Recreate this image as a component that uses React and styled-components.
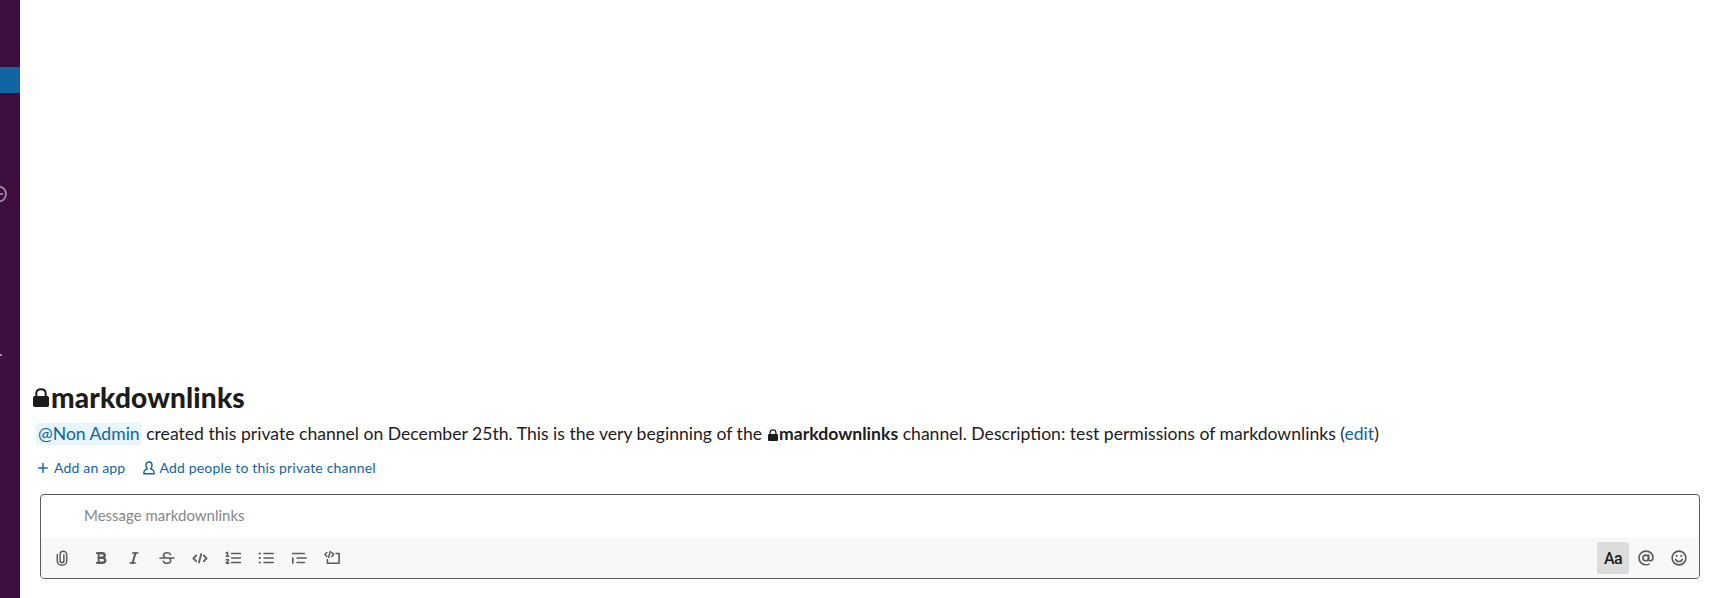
import React from "react";
import styled, { createGlobalStyle } from "styled-components";

const GlobalStyle = createGlobalStyle`
  *, *::before, *::after { box-sizing: border-box; }
  body {
    margin: 0;
    background: #fff;
    color: #1d1c1d;
    font-family: Lato, "Liberation Sans", sans-serif;
    overflow: hidden;
  }
`;

const Page = styled.div`
  display: flex;
  width: 100%;
  height: 598px;
`;

const Sidebar = styled.aside`
  display: flex;
  flex-direction: column;
  width: 20px;
  flex: none;
  overflow: hidden;
  background: #3f0e40;
`;

const SidebarItem = styled.div`
  flex: none;
  height: ${(p) => p.$height}px;
  margin-top: ${(p) => p.$gap}px;
  background: ${(p) => (p.$active ? "#1264a3" : "transparent")};
  svg { display: block; }
`;

const Main = styled.main`
  display: flex;
  flex-direction: column;
  justify-content: flex-end;
  flex: 1;
  min-width: 0;
  padding: 0 10px 19px 12px;
`;

const Title = styled.h1`
  display: flex;
  align-items: center;
  height: 34px;
  margin: 0;
  font-size: 28px;
  font-weight: 900;
  line-height: 34px;
  letter-spacing: 0.18px;
  svg { flex: none; margin: 0 2px 0 1px; }
`;

const Intro = styled.p`
  margin: 8px 0 0 4px;
  height: 24px;
  font-size: 17.6px;
  line-height: 24px;
  white-space: nowrap;
`;

const Mention = styled.span`
  padding: 0 2px 1px;
  border-radius: 3px;
  background: #e8f5fa;
  color: #1264a3;
`;

const ChannelName = styled.b`
  font-weight: 700;
  svg { margin: 0 1.5px 0 1px; vertical-align: -0.5px; }
`;

const Link = styled.a`
  color: #1264a3;
`;

const Actions = styled.div`
  display: flex;
  align-items: center;
  gap: 18px;
  height: 20px;
  margin: 12px 0 0 6px;
`;

const Action = styled.a`
  display: flex;
  align-items: center;
  gap: ${(p) => p.$gap}px;
  color: #1264a3;
  font-size: 14px;
  line-height: 20px;
  letter-spacing: 0.18px;
  white-space: nowrap;
  svg { flex: none; }
`;

const Composer = styled.section`
  height: 85px;
  margin: 16px 0 0 8px;
  border: 1px solid #5b5a5d;
  border-radius: 4px;
  overflow: hidden;
`;

const Message = styled.div`
  height: 43px;
  padding: 9px 0 0 43px;
  color: #868686;
  font-size: 15px;
  line-height: 22px;
`;

const Toolbar = styled.div`
  display: flex;
  align-items: center;
  justify-content: space-between;
  height: 40px;
  padding: 0 4px 0 4.5px;
  background: #f8f8f8;
`;

const ToolGroup = styled.div`
  display: flex;
  gap: 1px;
`;

const Tool = styled.button`
  display: flex;
  align-items: center;
  justify-content: center;
  width: 32px;
  height: 32px;
  padding: 0;
  margin: 0 ${(p) => p.$after || 0}px 0 0;
  border: 0;
  border-radius: 2px;
  background: ${(p) => (p.$active ? "#dcdcdc" : "transparent")};
  color: ${(p) => (p.$active ? "#1d1c1d" : "#5b5a5d")};
  font: 500 16px Roboto, sans-serif;
  letter-spacing: -0.6px;
`;

const Glyph = styled.svg`
  fill: none;
  stroke: currentColor;
  stroke-width: ${(p) => p.$stroke || 1.6};
  stroke-linecap: round;
  stroke-linejoin: round;
`;

const Icon = ({ w = 16, h = 16, stroke, children }) => (
  <Glyph width={w} height={h} viewBox={`0 0 ${w} ${h}`} $stroke={stroke}>{children}</Glyph>
);

const Lock = ({ w, h }) => (
  <svg width={w} height={h} viewBox="0 0 16 19">
    <path d="M3.3 9V5.6C3.3 2.8 5.2 1.2 8 1.2s4.7 1.6 4.7 4.4V9" fill="none" stroke="currentColor" strokeWidth="2" />
    <rect x="0" y="8" width="16" height="11" rx="1.7" fill="currentColor" />
  </svg>
);

const Clip = () => (
  <Icon stroke={1.5}><path d="M3.3 4.500v6.400a4.700 4.300 0 0 0 9.400 0V4.500a3.300 3.300 0 0 0-6.600 0v6.200a1.900 1.900 0 0 0 3.800 0V4.800" /></Icon>
);
const Bold = () => (
  <Icon><path d="M3 3.200h6M3 12.800h6M5.600 3v10M5.500 7.800H9" strokeWidth="1.8" strokeLinecap="butt" /><path d="M5.800 3.300h3.200c3.600 0 3.600 4.500 0 4.500H5.800M9 7.800c4.400 0 4.400 4.900 0 4.900H5.800" strokeWidth="2.400" /></Icon>
);
const Italic = () => (
  <Icon><path d="M6.500 3h5.500M4 13h5.500" strokeWidth="1.5" /><path d="M9.500 3 6.500 13" strokeWidth="2" /></Icon>
);
const Strike = () => (
  <Icon><path d="M1 8h14M11.500 4.500C11 3.300 9.800 2.700 8 2.700c-2 0-3.500 1-3.500 2.600 0 1.100.6 1.900 1.700 2.400M4.300 11.200c.5 1.400 1.800 2.100 3.700 2.100 2.200 0 3.700-1 3.700-2.700 0-.8-.4-1.500-1.100-2" /></Icon>
);
const Code = () => (
  <Icon stroke={1.8}><path d="M4.200 5.500 1.300 8.300l2.900 2.800M11.800 5.500l2.900 2.800-2.900 2.800M9.200 4 7 12.500" /></Icon>
);
const Ordered = () => (
  <Icon stroke={1.5}><path d="M6.500 3.500h9M6.500 8h9M6.500 12.500h9" /><path d="M1.200 3l1.300-.7v4M1.200 6.300h2.600M1.200 9.900c.5-.5 2.500-.5 2.300.6-.1.9-2.300 1.700-2.300 2.700h2.800" strokeWidth="1.500" /></Icon>
);
const Bullets = () => (
  <Icon stroke={1.5}><path d="M6 3.500h9.300M6 8h9.300M6 12.500h9.300" /><path d="M1.700 3.500h.1M1.700 8h.1M1.700 12.500h.1" strokeWidth="2.200" /></Icon>
);
const Quote = () => (
  <Icon stroke={1.5}><path d="M1.500 3.500h11.800M6 8h9.300M6 12.500h7.300" /><path d="M1.800 8v5" strokeWidth="1.700" /></Icon>
);
const CodeBlock = () => (
  <Icon stroke={1.5}><path d="M2.800 2.500.9 4.500l1.900 2M7.800 2.500l1.900 2-1.900 2M6.200 1.500 4.700 7.300" /><path d="M12.200 3.500h2.900v9.700H3.400V9.600" strokeWidth="1.600" /></Icon>
);
const At = () => (
  <Icon stroke={1.6}><circle cx="7.8" cy="7.900" r="2.800" /><path d="M10.600 5v3.900c0 1.200.6 1.800 1.800 1.800 1.700 0 2.500-1.300 2.500-3 0-4-2.900-6.600-6.900-6.600C4 1.100 1 4 1 7.900c0 4 3 6.900 7 6.900 1.200 0 2.300-.2 3.200-.7" /></Icon>
);
const Smile = () => (
  <Icon stroke={1.6}><circle cx="8" cy="8" r="6.900" /><path d="M4.600 9.200c1 3.100 5.800 3.100 6.800 0" strokeWidth="1.500" /><path d="M5.700 5.600v.4M10.300 5.600v.4" strokeWidth="1.900" /></Icon>
);
const Plus = () => <Icon w={10} h={12} stroke={1.4}><path d="M.7 6h8.600M5 1.500v9" /></Icon>;
const Person = () => (
  <Icon w={12} h={14} stroke={1.4}><path d="M6 1C4 1 3 2.300 3 4.400c0 1.500.5 2.800 1.400 3.500L1.800 9.200C1 9.800.8 10.800.8 12.800h10.400c0-2-.2-3-1-3.600L7.600 7.900C8.500 7.200 9 5.900 9 4.400 9 2.300 8 1 6 1Z" /></Icon>
);

const formatTools = [Bold, Italic, Strike, Code, Ordered, Bullets, Quote, CodeBlock];

export default function App() {
  return (
    <Page>
      <GlobalStyle />
      <Sidebar>
        <SidebarItem $gap={67} $height={26} $active />
        <SidebarItem $gap={92} $height={18}>
          <svg width="20" height="18" viewBox="0 0 20 18" fill="none" stroke="#a591a9" strokeWidth="1.7">
            <circle cx="-1.5" cy="9" r="7.5" /><path d="M-5 9h8" />
          </svg>
        </SidebarItem>
        <SidebarItem $gap={147} $height={8}>
          <svg width="20" height="8" viewBox="0 0 20 8"><path d="M0 5h2" stroke="#a58fa8" strokeWidth="2" /></svg>
        </SidebarItem>
      </Sidebar>
      <Main>
        <Title><Lock w={16} h={19} />markdownlinks</Title>
        <Intro>
          <Mention>@Non Admin</Mention> created this private channel on December 25th. This is the very beginning of the{" "}
          <ChannelName><Lock w={10} h={12} />markdownlinks</ChannelName> channel. Description: test permissions of markdownlinks (<Link>edit</Link>)
        </Intro>
        <Actions>
          <Action $gap={6}><Plus />Add an app</Action>
          <Action $gap={4}><Person />Add people to this private channel</Action>
        </Actions>
        <Composer>
          <Message>Message markdownlinks</Message>
          <Toolbar>
            <ToolGroup>
              <Tool $after={6}><Clip /></Tool>
              {formatTools.map((Shape, i) => <Tool key={i}><Shape /></Tool>)}
            </ToolGroup>
            <ToolGroup>
              <Tool $active>Aa</Tool>
              <Tool><At /></Tool>
              <Tool><Smile /></Tool>
            </ToolGroup>
          </Toolbar>
        </Composer>
      </Main>
    </Page>
  );
}
